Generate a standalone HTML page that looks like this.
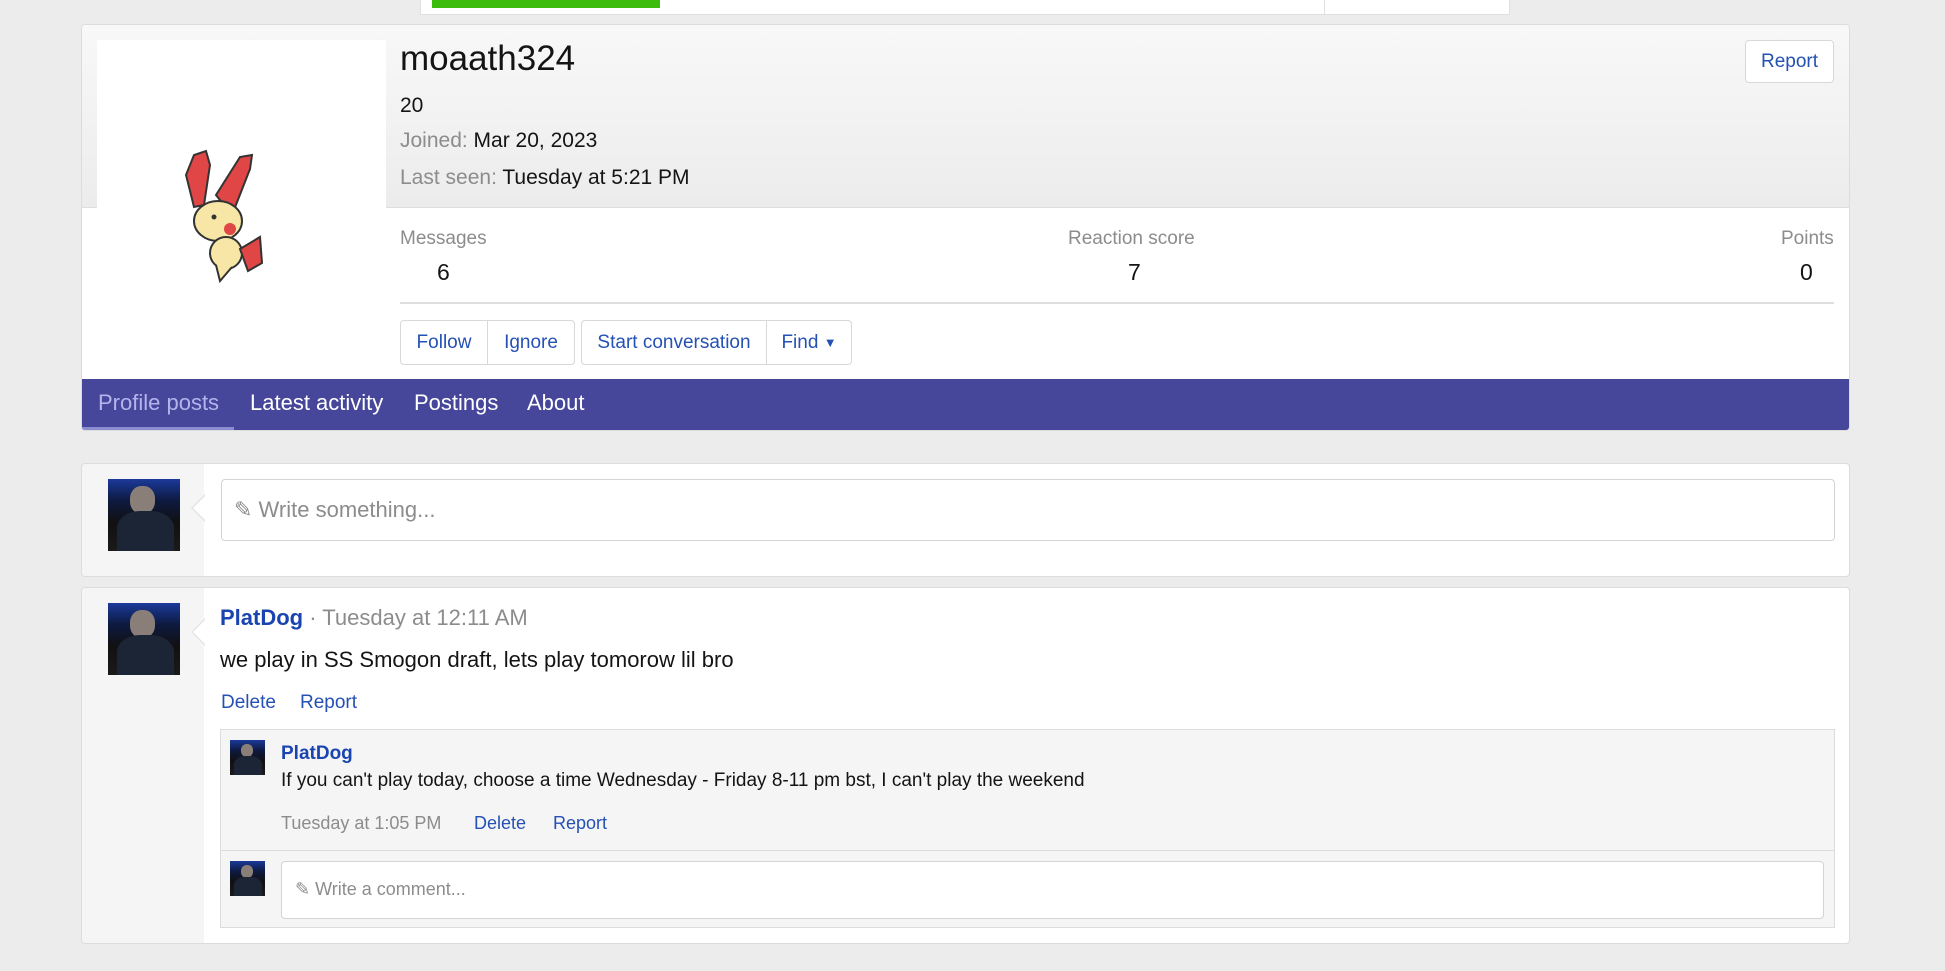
<!DOCTYPE html>
<html><head><meta charset="utf-8"><style>
*{margin:0;padding:0;box-sizing:border-box}
body{width:1945px;height:971px;background:#ececec;font-family:"Liberation Sans",sans-serif;position:relative;overflow:hidden;color:#141414}
.a{position:absolute;white-space:nowrap}
.card{position:absolute;background:#fff;border:1px solid #dcdcdc;border-radius:4px}
.lnk{color:#2451b3}
.g{color:#8c8c8c}
.av{position:absolute;background:linear-gradient(180deg,#1b3a9a 0%,#0d1a40 30%,#111 60%,#1a1a1a 100%);overflow:hidden}
.av:before{content:"";position:absolute;left:30%;top:10%;width:35%;height:38%;background:#8a7f78;border-radius:45%}
.av:after{content:"";position:absolute;left:12%;top:45%;width:80%;height:60%;background:#1c2536;border-radius:40% 40% 0 0}
.btn{position:absolute;border:1px solid #d8d8d8;background:#fff;color:#2451b3;font-size:19px;display:flex;align-items:center;justify-content:center}
.arr{position:absolute;width:0;height:0;border-top:14px solid transparent;border-bottom:14px solid transparent;border-right:14px solid #e4e4e4}
.arr:after{content:"";position:absolute;left:2px;top:-13px;border-top:13px solid transparent;border-bottom:13px solid transparent;border-right:13px solid #fff}
</style></head><body>
<div class="a" style="left:420px;top:0;width:1090px;height:15px;background:#fff;border:1px solid #e0e0e0;border-top:0"></div>
<div class="a" style="left:432px;top:0;width:228px;height:8px;background:#3cbc0c"></div>
<div class="a" style="left:1324px;top:0;width:1px;height:15px;background:#e0e0e0"></div>

<div class="card" style="left:81px;top:24px;width:1769px;height:407px;overflow:hidden">
 <div class="a" style="left:0;top:0;width:1769px;height:183px;background:linear-gradient(180deg,#f8f8f8,#ececec);border-bottom:1px solid #dedede"></div>
 <div class="a" style="left:15px;top:15px;width:289px;height:250px;background:#fff"></div>
 <svg class="a" style="left:98px;top:100px" width="100" height="160" viewBox="0 0 100 160">
  <path d="M6 50 L14 30 L26 26 L30 40 L24 80 L14 82 Z" fill="#e04646" stroke="#333" stroke-width="2"/>
  <path d="M36 70 L60 32 L72 30 L70 44 L52 90 Z" fill="#e04646" stroke="#333" stroke-width="2"/>
  <ellipse cx="38" cy="96" rx="24" ry="20" fill="#f7e6a6" stroke="#333" stroke-width="2"/>
  <circle cx="50" cy="104" r="6" fill="#e04646"/>
  <circle cx="34" cy="92" r="2.5" fill="#333"/>
  <ellipse cx="46" cy="128" rx="16" ry="16" fill="#f7e6a6" stroke="#333" stroke-width="2"/>
  <path d="M60 124 L80 112 L82 138 L68 146 Z" fill="#e04646" stroke="#333" stroke-width="2"/>
  <path d="M36 140 L40 156 L52 142" fill="#f7e6a6" stroke="#333" stroke-width="2"/>
 </svg>
 <div class="a" style="left:318px;top:14px;font-size:35px;color:#141414">moaath324</div>
 <div class="a" style="left:318px;top:69px;font-size:21px">20</div>
 <div class="a" style="left:318px;top:104px;font-size:21px"><span class="g">Joined:</span> Mar 20, 2023</div>
 <div class="a" style="left:318px;top:141px;font-size:21px"><span class="g">Last seen:</span> Tuesday at 5:21 PM</div>
 <div class="btn" style="left:1663px;top:15px;width:89px;height:43px;border-radius:4px">Report</div>
 <div class="a g" style="left:318px;top:203px;font-size:19px">Messages</div>
 <div class="a" style="left:355px;top:234px;font-size:23px">6</div>
 <div class="a g" style="left:986px;top:203px;font-size:19px">Reaction score</div>
 <div class="a" style="left:1046px;top:234px;font-size:23px">7</div>
 <div class="a g" style="left:1699px;top:203px;font-size:19px">Points</div>
 <div class="a" style="left:1718px;top:234px;font-size:23px">0</div>
 <div class="a" style="left:318px;top:277px;width:1434px;height:2px;background:#dedede"></div>
 <div class="btn" style="left:318px;top:295px;width:88px;height:45px;border-radius:4px 0 0 4px">Follow</div>
 <div class="btn" style="left:405px;top:295px;width:88px;height:45px;border-radius:0 4px 4px 0">Ignore</div>
 <div class="btn" style="left:499px;top:295px;width:186px;height:45px;border-radius:4px 0 0 4px">Start conversation</div>
 <div class="btn" style="left:684px;top:295px;width:86px;height:45px;border-radius:0 4px 4px 0">Find&nbsp;<span style="font-size:13px">▼</span></div>
 <div class="a" style="left:0;top:354px;width:1769px;height:53px;background:#46469a"></div>
 <div class="a" style="left:0;top:402px;width:152px;height:5px;background:#8c8cd0"></div>
 <div class="a" style="left:16px;top:365px;font-size:22px;color:#b4b4ec">Profile posts</div>
 <div class="a" style="left:168px;top:365px;font-size:22px;color:#fff">Latest activity</div>
 <div class="a" style="left:332px;top:365px;font-size:22px;color:#fff">Postings</div>
 <div class="a" style="left:445px;top:365px;font-size:22px;color:#fff">About</div>
</div>

<div class="card" style="left:81px;top:463px;width:1769px;height:114px;overflow:hidden">
 <div class="a" style="left:0;top:0;width:122px;height:114px;background:#f5f5f5"></div>
 <div class="arr" style="left:109px;top:30px"></div>
 <div class="av" style="left:26px;top:15px;width:72px;height:72px"></div>
 <div class="a" style="left:139px;top:15px;width:1614px;height:62px;border:1px solid #d4d4d4;border-radius:4px;background:#fff"></div>
 <div class="a g" style="left:152px;top:33px;font-size:22px">✎ Write something...</div>
</div>

<div class="card" style="left:81px;top:587px;width:1769px;height:357px;overflow:hidden">
 <div class="a" style="left:0;top:0;width:122px;height:357px;background:#f5f5f5"></div>
 <div class="arr" style="left:109px;top:30px"></div>
 <div class="av" style="left:26px;top:15px;width:72px;height:72px"></div>
 <div class="a" style="left:138px;top:17px;font-size:22px"><b style="color:#1a45b0">PlatDog</b> <span class="g">· Tuesday at 12:11 AM</span></div>
 <div class="a" style="left:138px;top:59px;font-size:22px">we play in SS Smogon draft, lets play tomorow lil bro</div>
 <div class="a lnk" style="left:139px;top:104px;font-size:19px">Delete</div>
 <div class="a lnk" style="left:218px;top:104px;font-size:19px">Report</div>
 <div class="a" style="left:138px;top:141px;width:1615px;height:199px;background:#f5f5f5;border:1px solid #dcdcdc"></div>
 <div class="av" style="left:148px;top:152px;width:35px;height:35px"></div>
 <div class="a" style="left:199px;top:155px;font-size:19px;font-weight:bold;color:#1a45b0">PlatDog</div>
 <div class="a" style="left:199px;top:182px;font-size:19px">If you can't play today, choose a time Wednesday - Friday 8-11 pm bst, I can't play the weekend</div>
 <div class="a g" style="left:199px;top:225px;font-size:18px">Tuesday at 1:05 PM</div>
 <div class="a lnk" style="left:392px;top:225px;font-size:18px">Delete</div>
 <div class="a lnk" style="left:471px;top:225px;font-size:18px">Report</div>
 <div class="a" style="left:138px;top:262px;width:1615px;height:1px;background:#dcdcdc"></div>
 <div class="av" style="left:148px;top:273px;width:35px;height:35px"></div>
 <div class="a" style="left:199px;top:273px;width:1543px;height:58px;background:#fff;border:1px solid #d4d4d4;border-radius:4px"></div>
 <div class="a g" style="left:213px;top:291px;font-size:18px">✎ Write a comment...</div>
</div>
</body></html>
